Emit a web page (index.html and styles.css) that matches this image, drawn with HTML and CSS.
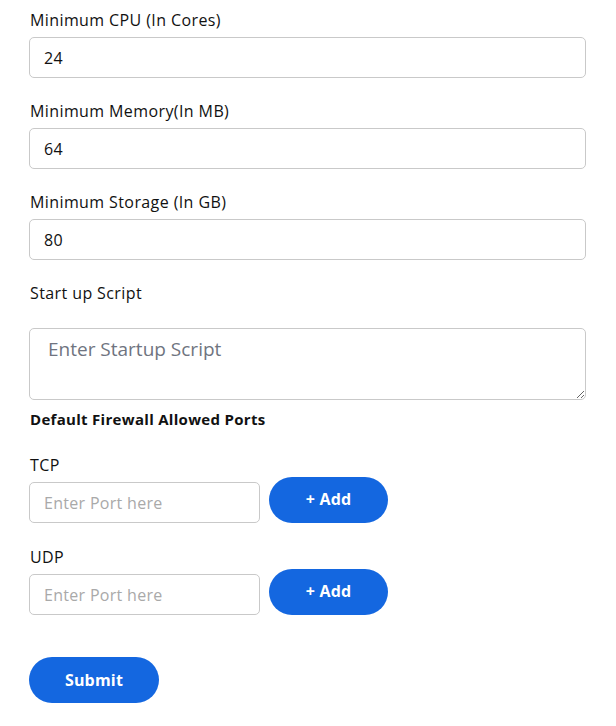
FILE: index.html
```html
<!DOCTYPE html>
<html lang="en">
<head>
<meta charset="utf-8">
<title>Form</title>
<link rel="stylesheet" href="styles.css">
</head>
<body>
<form class="form">
  <div class="group">
    <label class="label">Minimum CPU (In Cores)</label>
    <input class="input" type="text" value="24">
  </div>
  <div class="group">
    <label class="label">Minimum Memory(In MB)</label>
    <input class="input" type="text" value="64">
  </div>
  <div class="group">
    <label class="label">Minimum Storage (In GB)</label>
    <input class="input" type="text" value="80">
  </div>
  <div class="group group-script">
    <label class="label">Start up Script</label>
    <textarea class="textarea" placeholder="Enter Startup Script"></textarea>
  </div>
  <h4 class="heading">Default Firewall Allowed Ports</h4>
  <div class="port-group">
    <label class="label label-port">TCP</label>
    <div class="port-row">
      <input class="input input-port" type="text" placeholder="Enter Port here">
      <button type="button" class="btn btn-add">+ Add</button>
    </div>
  </div>
  <div class="port-group">
    <label class="label label-port">UDP</label>
    <div class="port-row">
      <input class="input input-port" type="text" placeholder="Enter Port here">
      <button type="button" class="btn btn-add">+ Add</button>
    </div>
  </div>
  <button type="submit" class="btn btn-submit">Submit</button>
</form>
</body>
</html>
```
FILE: styles.css
```css
* { box-sizing: border-box; }
html, body { margin: 0; padding: 0; background: #fff; }
body {
  font-family: "Open Sans", "Liberation Sans", sans-serif;
  font-size: 16px;
  color: #111;
}
.form {
  width: 586px;
  padding: 9px 0 0 29px;
  display: flex;
  flex-direction: column;
  align-items: flex-start;
}
.group {
  width: 557px;
  display: flex;
  flex-direction: column;
  margin-bottom: 22px;
}
.label {
  display: block;
  line-height: 22px;
  font-size: 16px;
  letter-spacing: 0.4px;
  margin: 0 0 6px 1px;
  color: #111;
}
.input {
  display: block;
  width: 100%;
  height: 41px;
  border: 1px solid #c9c9c9;
  border-radius: 5px;
  padding: 0 14px;
  font-family: inherit;
  font-size: 16px;
  letter-spacing: 0.3px;
  color: #111;
  outline: none;
}
.input::placeholder { color: #a9a9a9; }
.group-script { margin-bottom: 8px; }
.group-script .label { margin-bottom: 24px; }
.textarea {
  display: block;
  width: 100%;
  height: 72px;
  border: 1px solid #c9c9c9;
  border-radius: 5px;
  padding: 7px 18px;
  font-family: inherit;
  font-size: 19px;
  color: #111;
  outline: none;
}
.textarea::placeholder { color: #6f7480; }
.heading {
  margin: 0 0 24px 1px;
  font-size: 15px;
  letter-spacing: 0.3px;
  line-height: 22px;
  font-weight: 700;
  color: #111;
}
.port-group { margin-bottom: 23px; }
.label-port { margin-bottom: 1px; }
.port-row {
  display: flex;
  align-items: flex-end;
  gap: 9px;
}
.input-port { width: 231px; }
.btn {
  border: none;
  background: #1467e0;
  color: #fff;
  font-family: inherit;
  font-weight: 700;
  font-size: 16px;
  letter-spacing: 0.2px;
  height: 46px;
  border-radius: 23px;
  cursor: pointer;
}
.btn-add { width: 119px; padding-bottom: 4px; }
.btn-submit { width: 130px; margin-top: 19px; padding-bottom: 2px; }
```
